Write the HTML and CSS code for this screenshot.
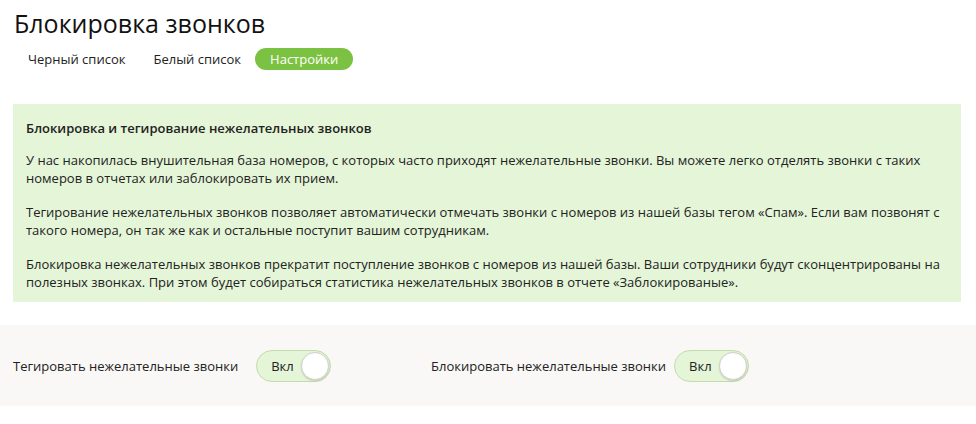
FILE: index.html
```html
<!DOCTYPE html>
<html lang="ru">
<head>
<meta charset="utf-8">
<link rel="stylesheet" href="styles.css">
</head>
<body>
<div class="head">
  <h1 class="title">Блокировка звонков</h1>
  <nav class="tabs">
    <span class="tab">Черный список</span>
    <span class="tab">Белый список</span>
    <span class="tab active">Настройки</span>
  </nav>
</div>
<div class="info">
  <p class="info-title">Блокировка и тегирование нежелательных звонков</p>
  <p>У нас накопилась внушительная база номеров, с которых часто приходят нежелательные звонки. Вы можете легко отделять звонки с таких номеров в отчетах или заблокировать их прием.</p>
  <p>Тегирование нежелательных звонков позволяет автоматически отмечать звонки с номеров из нашей базы тегом «Спам». Если вам позвонят с такого номера, он так же как и остальные поступит вашим сотрудникам.</p>
  <p>Блокировка нежелательных звонков прекратит поступление звонков с номеров из нашей базы. Ваши сотрудники будут сконцентрированы на полезных звонках. При этом будет собираться статистика нежелательных звонков в отчете «Заблокированые».</p>
</div>
<div class="settings">
  <div class="setting first">
    <span class="label">Тегировать нежелательные звонки</span>
    <span class="toggle"><span class="toggle-text">Вкл</span><span class="knob"></span></span>
  </div>
  <div class="setting second">
    <span class="label">Блокировать нежелательные звонки</span>
    <span class="toggle"><span class="toggle-text">Вкл</span><span class="knob"></span></span>
  </div>
</div>
</body>
</html>
```
FILE: styles.css
```css
* { box-sizing: border-box; }
html, body { margin: 0; padding: 0; background: #fff; }
body {
  font-family: "Open Sans", "Noto Sans", sans-serif;
  color: #222;
  font-size: 13px;
}
.head { padding: 6px 0 0 14px; }
.title {
  margin: 0;
  font-size: 25px;
  font-weight: 500;
  line-height: 34px;
  color: #111;
}
.tabs {
  display: flex;
  align-items: center;
  margin-top: 8px;
}
.tab {
  display: inline-block;
  height: 22px;
  line-height: 22px;
  padding: 0 14px;
  border-radius: 11px;
  font-size: 13px;
  color: #222;
}
.tab.active {
  background: #7cc242;
  color: #fff;
  padding: 0 15px;
}
.info {
  margin: 34px 15px 0 13px;
  background: #e5f5d8;
  padding: 15px 13px 11px;
  line-height: 18px;
  font-size: 13px;
  color: #222;
}
.info p { margin: 0 0 16px; }
.info p:last-child { margin-bottom: 0; }
.info .info-title { font-weight: 600; margin-bottom: 14px; }
.settings {
  margin-top: 23px;
  background: #f9f8f6;
  height: 81px;
  display: flex;
  align-items: center;
  padding-left: 13px;
}
.setting { display: flex; align-items: center; }
.setting.first { width: 418px; }
.label { font-size: 13px; color: #222; }
.first .label { margin-right: 18px; }
.second .label { margin-right: 8px; }
.toggle {
  display: flex;
  align-items: center;
  justify-content: space-between;
  width: 75px;
  height: 32px;
  border-radius: 16px;
  background: #e5f5d8;
  border: 1px solid #c5dcaa;
  padding: 0 1px 0 14px;
}
.toggle-text { font-size: 13px; color: #222; }
.knob {
  width: 28px;
  height: 28px;
  border-radius: 50%;
  background: #fff;
  border: 1px solid #d0d0d0;
  box-shadow: 0 1px 2px rgba(0,0,0,0.15);
}
```
